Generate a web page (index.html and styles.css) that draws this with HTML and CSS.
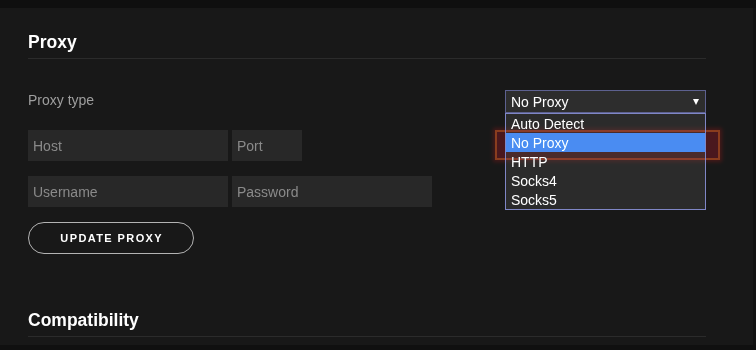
FILE: index.html
```html
<!DOCTYPE html>
<html lang="en">
<head>
<meta charset="utf-8">
<title>Settings - Proxy</title>
<link rel="stylesheet" href="styles.css">
</head>
<body>
<div class="window">
  <div class="topbar"></div>
  <div class="main">
    <div class="panel">
      <section class="section">
        <h2 class="section-title">Proxy</h2>
        <div class="type-row">
          <span class="label">Proxy type</span>
          <div class="select-wrap">
            <div class="select"><span>No Proxy</span><span class="caret"></span></div>
            <ul class="options">
              <li>Auto Detect</li>
              <li class="selected">No Proxy</li>
              <li>HTTP</li>
              <li>Socks4</li>
              <li>Socks5</li>
            </ul>
            <div class="annotation"></div>
          </div>
        </div>
        <div class="field-row">
          <input class="field field-wide" type="text" placeholder="Host">
          <input class="field field-narrow" type="text" placeholder="Port">
        </div>
        <div class="field-row field-row-tight">
          <input class="field field-wide" type="text" placeholder="Username">
          <input class="field field-wide" type="password" placeholder="Password">
        </div>
        <button class="btn" type="button">UPDATE PROXY</button>
      </section>
      <section class="section section-compat">
        <h2 class="section-title">Compatibility</h2>
      </section>
    </div>
    <div class="edge"></div>
  </div>
</div>
</body>
</html>
```

FILE: styles.css
```css
html, body {
  margin: 0;
  padding: 0;
  background: #101010;
}

body {
  font-family: "Liberation Sans", Arial, sans-serif;
  color: #ffffff;
}

.window {
  width: 756px;
  height: 350px;
  overflow: hidden;
  display: flex;
  flex-direction: column;
  background: #101010;
}

.topbar {
  height: 8px;
  flex: none;
  background: #0f0f0f;
}

.main {
  display: flex;
  height: 337px;
  flex: none;
}

.panel {
  width: 753px;
  height: 337px;
  box-sizing: border-box;
  padding: 24px 47px 0 28px;
  background: #181818;
  overflow: hidden;
}

.edge {
  flex: 1;
  background: #121212;
}

.section-title {
  margin: 0;
  font-size: 17.5px;
  line-height: 20px;
  font-weight: 700;
  color: #ffffff;
  padding-bottom: 6px;
  border-bottom: 1px solid #2b2b2b;
}

.type-row {
  margin-top: 31px;
  display: flex;
  justify-content: space-between;
  align-items: flex-start;
}

.label {
  padding-top: 2px;
  font-size: 14px;
  line-height: 16px;
  color: #9e9e9e;
}

.select-wrap {
  position: relative;
  width: 201px;
}

.select {
  height: 23px;
  box-sizing: border-box;
  border: 1px solid #5d6190;
  background: #2d2d2d;
  padding: 0 6px 0 5px;
  display: flex;
  align-items: center;
  justify-content: space-between;
  font-size: 14px;
  color: #ffffff;
}

.caret {
  width: 0;
  height: 0;
  border-left: 3.5px solid transparent;
  border-right: 3.5px solid transparent;
  border-top: 6px solid #ffffff;
  margin-top: 1px;
}

.options {
  position: absolute;
  top: 23px;
  left: 0;
  width: 201px;
  box-sizing: border-box;
  margin: 0;
  padding: 0;
  list-style: none;
  border: 1px solid #7f86c6;
  background: #2b2b2b;
}

.options li {
  height: 19px;
  box-sizing: border-box;
  padding: 2px 0 0 5px;
  line-height: 17px;
  font-size: 14px;
  color: #ffffff;
}

.options li.selected {
  background: #3d8cf2;
}

.annotation {
  position: absolute;
  left: -10px;
  top: 40px;
  width: 225px;
  height: 30px;
  box-sizing: border-box;
  border: 2px solid #8a3d1e;
  background: #4a0c1e;
  box-shadow: 0 0 4px 2px rgba(74, 6, 22, 0.9);
  mix-blend-mode: lighten;
  pointer-events: none;
}

.field-row {
  margin-top: 17px;
  display: flex;
  gap: 4px;
}

.field-row-tight {
  margin-top: 15px;
}

.field {
  height: 31px;
  box-sizing: border-box;
  border: none;
  outline: none;
  background: #282828;
  padding: 0 5px;
  margin: 0;
  font-family: "Liberation Sans", Arial, sans-serif;
  font-size: 14px;
  color: #ffffff;
}

.field::placeholder {
  color: #8a8a8a;
}

.field-wide {
  width: 200px;
}

.field-narrow {
  width: 70px;
}

.btn {
  display: block;
  margin-top: 15px;
  width: 166px;
  height: 32px;
  box-sizing: border-box;
  border: 1px solid #b3b3b3;
  border-radius: 16px;
  background: transparent;
  color: #ffffff;
  font-family: "Liberation Sans", Arial, sans-serif;
  font-size: 11px;
  font-weight: 700;
  letter-spacing: 1.4px;
  padding: 0 0 0 1.4px;
}

.section-compat {
  margin-top: 56px;
}
```
